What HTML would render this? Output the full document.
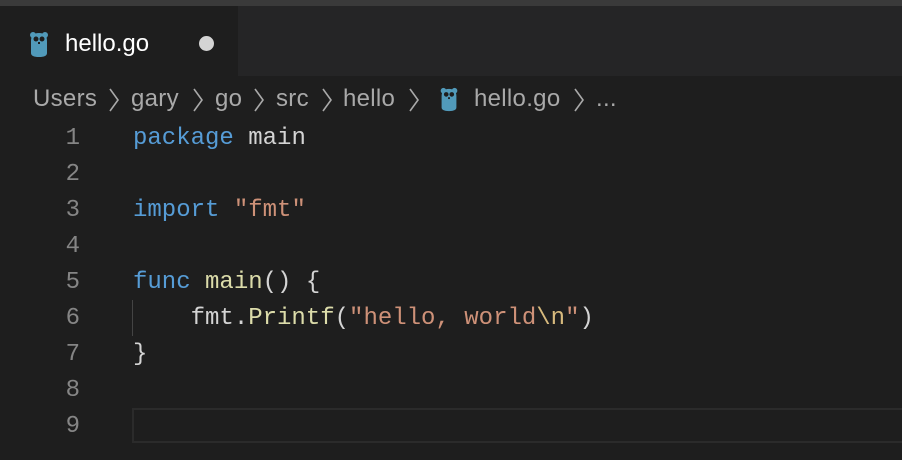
<!DOCTYPE html>
<html><head><meta charset="utf-8"><style>
*{margin:0;padding:0;box-sizing:border-box}
body{width:902px;height:460px;background:#1e1e1e;overflow:hidden;position:relative;font-family:"Liberation Sans",sans-serif}
.top{position:absolute;left:0;top:0;width:902px;height:6px;background:#3a3a3a}
.tabbar{position:absolute;left:0;top:6px;width:902px;height:70px;background:#252526}
.tab{position:absolute;left:0;top:0;width:238px;height:70px;background:#1e1e1e}
.tabname{position:absolute;left:65px;top:24px;font-size:24px;color:#fff}
.dot{position:absolute;left:199px;top:30px;width:15px;height:15px;border-radius:50%;background:#d4d4d4}
.cr{position:absolute;top:85px;font-size:24px;color:#a9a9a9;white-space:pre;letter-spacing:0.3px}
.ch{position:absolute;top:88px}
.gut{position:absolute;left:0;width:80px;text-align:right;font-family:"Liberation Mono",monospace;font-size:24px;color:#858585}
.code{position:absolute;left:133px;font-family:"Liberation Mono",monospace;font-size:24px;color:#d4d4d4;white-space:pre}
.k{color:#569cd6}.f{color:#dcdcaa}.s{color:#ce9178}.e{color:#d7ba7d}
.cur{position:absolute;left:132px;top:408px;width:780px;height:35px;border:2px solid #2b2b2b}
.guide{position:absolute;left:132px;top:300px;width:1px;height:36px;background:#444}
</style></head><body>
<div class="top"></div>
<div class="tabbar"><div class="tab">
<svg style="position:absolute;left:29px;top:25px" width="20" height="27" viewBox="0 0 20 27"><ellipse cx="4" cy="4" rx="3" ry="3" fill="#519aba"/><ellipse cx="16" cy="4" rx="3" ry="3" fill="#519aba"/><path d="M2 10 Q2 2 10 2 Q18 2 18 10 L18 22 Q18 26 10 26 Q2 26 2 22Z" fill="#519aba"/><circle cx="7" cy="8" r="2.5" fill="#1e1e1e"/><circle cx="13" cy="8" r="2.5" fill="#1e1e1e"/><rect x="9" y="11" width="2" height="2" fill="#1e1e1e"/></svg>
<div class="tabname">hello.go</div><div class="dot"></div></div></div>
<div class="cr" style="left:33px">Users</div>
<div class="cr" style="left:131px">gary</div>
<div class="cr" style="left:215px">go</div>
<div class="cr" style="left:276px">src</div>
<div class="cr" style="left:343px">hello</div>
<div class="cr" style="left:474px">hello.go</div>
<div class="cr" style="left:596px">...</div>
<svg class="ch" style="left:107px" width="14" height="24"><path d="M3 1 L11 12 L3 23" stroke="#a9a9a9" stroke-width="1.6" fill="none"/></svg>
<svg class="ch" style="left:191px" width="14" height="24"><path d="M3 1 L11 12 L3 23" stroke="#a9a9a9" stroke-width="1.6" fill="none"/></svg>
<svg class="ch" style="left:252px" width="14" height="24"><path d="M3 1 L11 12 L3 23" stroke="#a9a9a9" stroke-width="1.6" fill="none"/></svg>
<svg class="ch" style="left:320px" width="14" height="24"><path d="M3 1 L11 12 L3 23" stroke="#a9a9a9" stroke-width="1.6" fill="none"/></svg>
<svg class="ch" style="left:407px" width="14" height="24"><path d="M3 1 L11 12 L3 23" stroke="#a9a9a9" stroke-width="1.6" fill="none"/></svg>
<svg class="ch" style="left:572px" width="14" height="24"><path d="M3 1 L11 12 L3 23" stroke="#a9a9a9" stroke-width="1.6" fill="none"/></svg>
<svg style="position:absolute;left:439px;top:87px" width="20" height="25" viewBox="0 0 20 27"><ellipse cx="4" cy="4" rx="3" ry="3" fill="#519aba"/><ellipse cx="16" cy="4" rx="3" ry="3" fill="#519aba"/><path d="M2 10 Q2 2 10 2 Q18 2 18 10 L18 22 Q18 26 10 26 Q2 26 2 22Z" fill="#519aba"/><circle cx="7" cy="8" r="2.5" fill="#1e1e1e"/><circle cx="13" cy="8" r="2.5" fill="#1e1e1e"/><rect x="9" y="11" width="2" height="2" fill="#1e1e1e"/></svg>
<div class="cur"></div><div class="guide"></div>
<div class="gut" style="top:125px">1</div>
<div class="gut" style="top:161px">2</div>
<div class="gut" style="top:197px">3</div>
<div class="gut" style="top:233px">4</div>
<div class="gut" style="top:269px">5</div>
<div class="gut" style="top:305px">6</div>
<div class="gut" style="top:341px">7</div>
<div class="gut" style="top:377px">8</div>
<div class="gut" style="top:413px">9</div>
<div class="code" style="top:125px"><span class="k">package</span> main</div>
<div class="code" style="top:197px"><span class="k">import</span> <span class="s">"fmt"</span></div>
<div class="code" style="top:269px"><span class="k">func</span> <span class="f">main</span>() {</div>
<div class="code" style="top:305px">    fmt.<span class="f">Printf</span>(<span class="s">"hello, world</span><span class="e">\n</span><span class="s">"</span>)</div>
<div class="code" style="top:341px">}</div>
</body></html>
